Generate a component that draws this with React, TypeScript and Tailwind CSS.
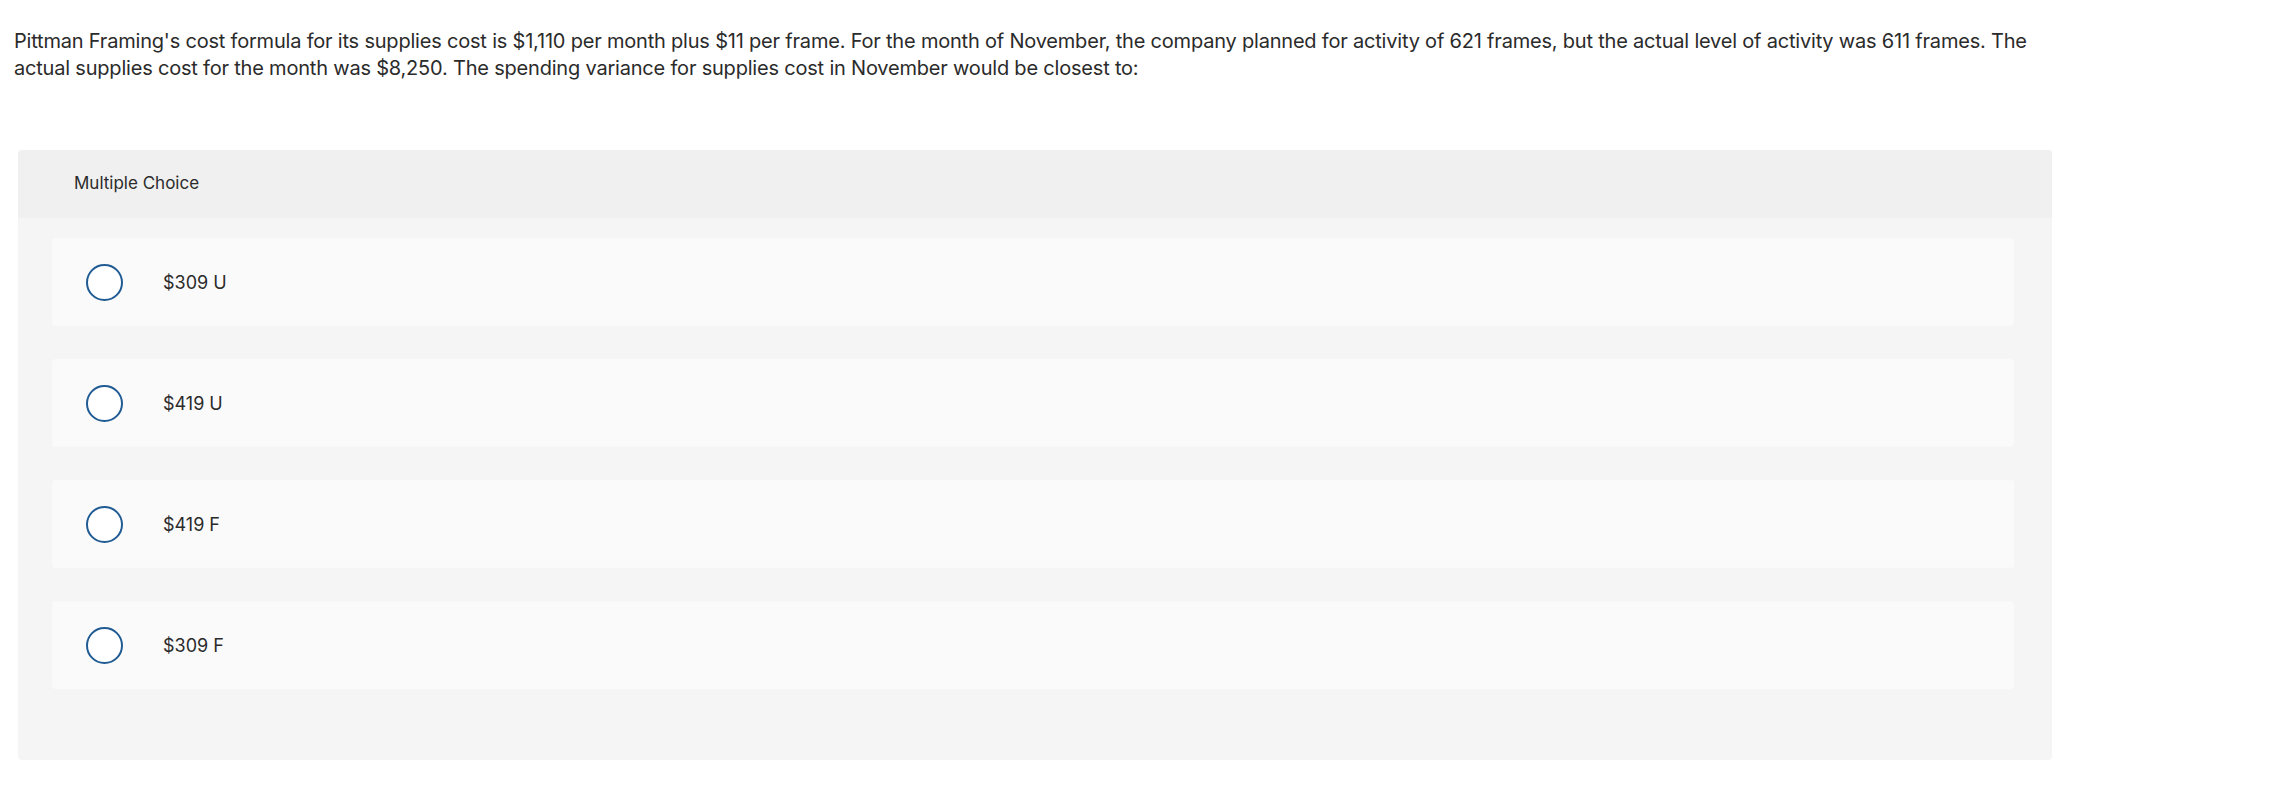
import React from 'react';

const options = ['$309 U', '$419 U', '$419 F', '$309 F'];

function Radio() {
  return <span className="block w-[37px] h-[37px] shrink-0 rounded-full border-2 border-[#215b94] bg-white" />;
}

export default function App() {
  return (
    <div className="min-h-[812px] bg-white text-[#2b2b2b] font-['Inter','Liberation_Sans',sans-serif]">
      {/* Question */}
      <div className="pl-[14px] pt-[28px] w-[2060px] text-[20px] leading-[27px] tracking-[-0.2px]">
        Pittman Framing's cost formula for its supplies cost is $1,110 per month plus $11 per frame. For the month of
        November, the company planned for activity of 621 frames, but the actual level of activity was 611 frames. The
        actual supplies cost for the month was $8,250. The spending variance for supplies cost in November would be
        closest to:
      </div>

      {/* Answer panel */}
      <div className="ml-[18px] mt-[68px] w-[2034px] rounded-[4px] bg-[#f5f5f5] overflow-hidden">
        <div className="h-[68px] flex items-center pl-[56px] bg-[#f0f0f0] text-[17px]">Multiple Choice</div>

        <div className="flex flex-col gap-[33px] pt-[20px] pb-[71px] pl-[34px] pr-[38px]">
          {options.map((opt) => (
            <div key={opt} className="h-[88px] flex items-center rounded-[4px] bg-[#fafafa] pl-[34px]">
              <Radio />
              <span className="ml-[40px] text-[18px]">{opt}</span>
            </div>
          ))}
        </div>
      </div>
    </div>
  );
}
